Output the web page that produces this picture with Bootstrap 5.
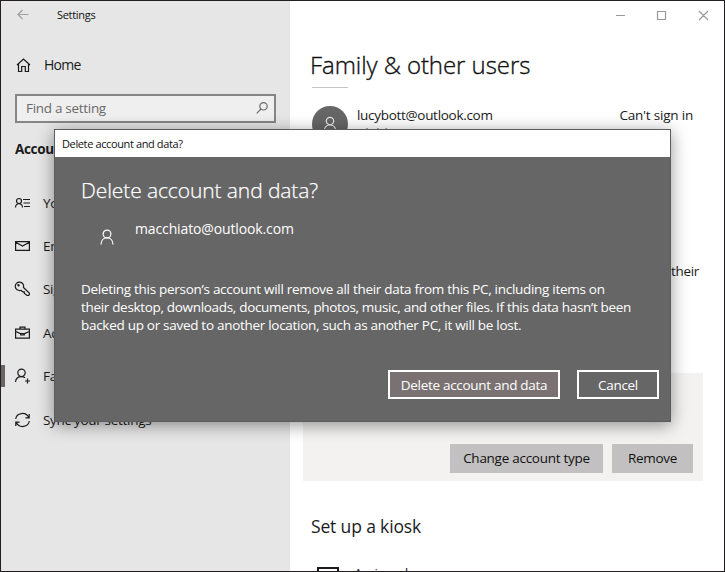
<!DOCTYPE html>
<html lang="en">
<head>
<meta charset="utf-8">
<meta name="viewport" content="width=device-width, initial-scale=1">
<title>Settings</title>
<link href="https://cdn.jsdelivr.net/npm/bootstrap@5.3.0/dist/css/bootstrap.min.css" rel="stylesheet">
<style>
body{font-family:"Open Sans","Noto Sans",sans-serif;font-size:13.5px;line-height:18px;letter-spacing:-.3px;color:#1b1b1b;background:#fff}
svg{display:block;fill:none;stroke:currentColor;stroke-width:1.2}
.app-window{height:572px;border:1px solid #231f20}
.side{width:289px;background:#e6e6e6}
.side-top{height:28px;padding-left:15px}
.back-arrow{color:#a0a0a0}
.small-title{font-size:11px;letter-spacing:-.3px;color:#111}
.side-top .small-title{margin-left:27px}
.home-link{height:30px;margin-top:21px;padding-left:14px;font-size:14px;letter-spacing:-.7px}
.search-box{width:261px;height:29px;margin:14px 0 0 14px;padding:0 6px 2px 9px;border:2px solid #868686;background:#efefef;color:#6b6b6b}
.side-heading{margin:17px 0 0 14px;letter-spacing:-.35px}
.side-list{padding-top:23px}
.side-item{height:43.4px;padding-left:13px}
.side-icon{width:17px;margin-right:12px}
.marker{width:4px;height:22px;background:#6b6463;margin:0 9px 0 -13px}
.main-pane{min-width:0}
.caption-bar{height:28px;padding-right:15px;color:#999}
.page-title{font-size:24px;font-weight:300;-webkit-text-stroke:.35px;line-height:32px;letter-spacing:-.06px;margin:20px 0 0 20px;color:#111}
.title-rule{width:36px;height:1px;background:#c4c4c4;margin:6px 0 0 22px}
.user-row{margin:18px 31px 0 22px}
.avatar{width:36px;height:36px;background:#666;color:#e8e8e8}
.user-name{margin-left:9px;line-height:18px}
.sign-state{letter-spacing:-.2px}
.their-line{margin:120px 25px 0 0}
.panel{width:400px;height:108px;margin:93px 0 0 13px;padding:0 10px 8px 0;gap:9px;background:#f3f2f1}
.flat-btn{height:29px;border:0;border-radius:0;background:#c2c0c0;color:#111;font-size:13.5px;line-height:18px;letter-spacing:-.27px;padding:0 0 1px}
.w-change{width:153px}.w-remove{width:81px}
.section-title{font-size:17.5px;font-weight:400;letter-spacing:-.15px;line-height:24px;margin:33px 0 0 21px}
.kiosk-row{margin:26px 0 0 27px}
.kiosk-icon{margin:3px 15px 0 0}
.dialog{left:53px;top:128px;width:617px;height:293px;background:#666;border:1px solid #5c5c5c;color:#fff;box-shadow:0 3px 16px rgba(0,0,0,.42)}
.dialog-title{height:27px;background:#fff;padding-left:7px;color:#111;font-size:11px;letter-spacing:-.38px}
.dialog-body{padding:19px 11px 0 26px}
.dialog-head{font-size:21px;font-weight:300;-webkit-text-stroke:.25px;line-height:28px;letter-spacing:-.1px;margin:0}
.account{height:30px;margin:16px 0 0 19px;font-size:14px;letter-spacing:-.13px}
.account-icon{margin-top:9px}
.account-name{margin-left:21px}
.dialog-text{margin:30px 0 0;letter-spacing:-.32px;white-space:nowrap}
.wider{letter-spacing:-.29px}
.dialog-actions{margin-top:36px;gap:17px}
.dlg-btn{height:29px;border:2px solid #fff;border-radius:0;color:#fff;font-size:13.5px;line-height:18px;letter-spacing:-.3px;padding:0}
.w-del{width:172px;background:#7a7272}.w-cancel{width:82px;background:#666}
</style>
<script src="https://cdn.jsdelivr.net/npm/bootstrap@5.3.0/dist/js/bootstrap.bundle.min.js"></script>
</head>
<body class="overflow-hidden">
<div class="app-window d-flex position-relative overflow-hidden">
  <nav class="side flex-shrink-0">
    <div class="side-top d-flex align-items-center">
      <svg class="back-arrow" width="14" height="12" viewBox="0 0 14 12"><path d="M12.5 5.500H2M6.500 1 2 5.500l4.500 4.500"/></svg>
      <span class="small-title">Settings</span>
    </div>
    <div class="home-link d-flex align-items-center">
      <svg class="side-icon" width="17" height="16" viewBox="0 0 17 16"><path d="M2 8 8.500 2 15 8M3.500 6.800V14.500H6.700V9.500H10.300V14.500H13.500V6.800"/></svg>
      <span>Home</span>
    </div>
    <div class="search-box d-flex align-items-center justify-content-between">
      <span>Find a setting</span>
      <svg width="12" height="13" viewBox="0 0 12 13"><circle cx="7.500" cy="5.300" r="3.700"/><path d="M5 8 .7 12.300"/></svg>
    </div>
    <div class="side-heading fw-bold">Accounts</div>
    <div class="side-list">
      <div class="side-item d-flex align-items-center"><svg class="side-icon" width="17" height="16" viewBox="0 0 17 16"><circle cx="5" cy="6" r="2.500"/><path d="M1.500 12.500C1.700 7.500 8.300 7.500 8.500 12.500M9 4.500H16M9.500 8H16M10 11.500H16"/></svg><span>Your info</span></div>
      <div class="side-item d-flex align-items-center"><svg class="side-icon" width="17" height="16" viewBox="0 0 17 16"><path d="M1.600 3.600H15.400V12.400H1.600ZM1.600 4.200 8.500 8 15.400 4.200"/></svg><span>Email &amp; accounts</span></div>
      <div class="side-item d-flex align-items-center"><svg class="side-icon" width="17" height="16" viewBox="0 0 17 16"><path d="M6.800 9.300A4.200 4.200 0 1 1 9.500 6.500L15.300 12Q16 14.700 13 14.500L10.300 12.200V10.800H8.800L6.800 9.300"/><circle cx="4.500" cy="4.300" r=".6"/></svg><span>Sign-in options</span></div>
      <div class="side-item d-flex align-items-center"><svg class="side-icon" width="17" height="16" viewBox="0 0 17 16"><path d="M1.600 4.200H15.400V13.200H1.600ZM6 4.200V2.200H11V4.200M1.600 6.500 6.500 8.600H10.500L15.400 6.500M6.700 8V10H10.300V8"/></svg><span>Access work or school</span></div>
      <div class="side-item d-flex align-items-center"><span class="marker"></span><svg class="side-icon" width="17" height="16" viewBox="0 0 17 16"><circle cx="7.500" cy="4.800" r="3.700"/><path d="M1.500 14C1.800 10.500 4.500 8.600 7.500 8.600 9 8.600 10 9 11 9.800M13.500 10.500V15.500M11 13H16"/></svg><span>Family &amp; other users</span></div>
      <div class="side-item d-flex align-items-center"><svg class="side-icon" width="17" height="16" viewBox="0 0 17 16"><path d="M1.700 7C2.500 .8 11.500-.8 14.800 5.500M15.200 2V5.800H11.400M15.300 9C14.500 15.200 5.500 16.800 2.200 10.500M1.800 14V10.200H5.600"/></svg><span>Sync your settings</span></div>
    </div>
  </nav>
  <main class="main-pane flex-grow-1">
    <div class="caption-bar d-flex align-items-center justify-content-end">
      <svg width="94" height="11" viewBox="0 0 94 11"><path d="M1 5.500H10M42.500 1.500H50.500V9.500H42.500ZM84 1 93 10M93 1 84 10"/></svg>
    </div>
    <h1 class="page-title">Family &amp; other users</h1>
    <div class="title-rule"></div>
    <div class="user-row d-flex">
      <span class="avatar rounded-circle d-flex align-items-center justify-content-center"><svg width="14" height="16" viewBox="0 0 14 16"><circle cx="7" cy="5" r="3.700"/><path d="M1.200 15C1.400 6.800 12.600 6.800 12.800 15"/></svg></span>
      <div class="user-name">
        <div>lucybott@outlook.com</div><div class="text-secondary">Child</div>
      </div>
      <span class="sign-state ms-auto">Can't sign in</span>
    </div>
    <div class="their-line text-end">their</div>
    <div class="panel d-flex justify-content-end align-items-end">
      <button class="btn flat-btn w-change">Change account type</button>
      <button class="btn flat-btn w-remove">Remove</button>
    </div>
    <h2 class="section-title">Set up a kiosk</h2>
    <div class="kiosk-row d-flex">
      <svg class="kiosk-icon" width="22" height="18" viewBox="0 0 22 18"><path stroke-width="2" d="M1 1H21V14H1Z"/></svg><span>Assigned access</span>
    </div>
  </main>
  <section class="dialog position-absolute" role="dialog">
    <div class="dialog-title d-flex align-items-center">Delete account and data?</div>
    <div class="dialog-body">
      <h2 class="dialog-head">Delete account and data?</h2>
      <div class="account d-flex align-items-start">
        <svg class="account-icon" width="14" height="16" viewBox="0 0 14 16"><circle cx="7" cy="5" r="3.900"/><path d="M1 15.500C1.300 6.500 12.700 6.500 13 15.500"/></svg>
        <span class="account-name">macchiato@outlook.com</span>
      </div>
      <p class="dialog-text"><span class="wider">Deleting this person’s account will remove all their data from this PC, including items on</span><br>their desktop, downloads, documents, photos, music, and other files. If this data hasn’t been<br><span class="wider">backed up or saved to another location, such as another PC, it will be lost.</span></p>
      <div class="d-flex justify-content-end dialog-actions">
        <button class="btn dlg-btn w-del">Delete account and data</button>
        <button class="btn dlg-btn w-cancel">Cancel</button>
      </div>
    </div>
  </section>
</div>
</body>
</html>
